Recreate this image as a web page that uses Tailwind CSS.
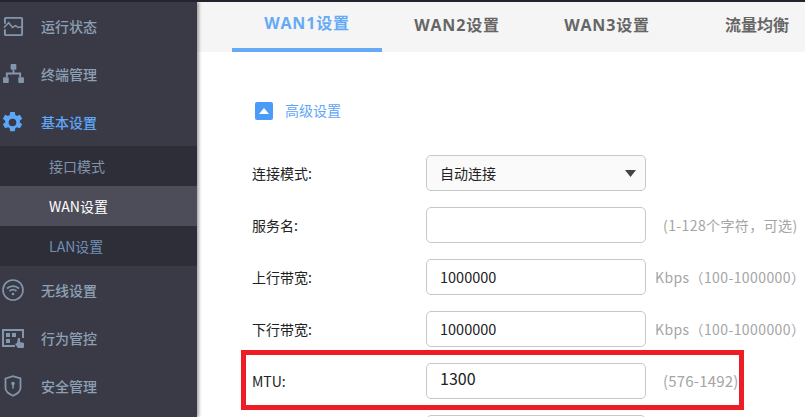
<!DOCTYPE html>
<html lang="zh">
<head>
<meta charset="utf-8">
<script src="https://cdn.jsdelivr.net/npm/@tailwindcss/browser@4"></script>
</head>
<body class="w-[805px] h-[417px] overflow-hidden bg-white font-['Noto_Sans_CJK_SC','Liberation_Sans',sans-serif]">
<div class="h-[2px] bg-[#24242e]"></div>
<div class="flex h-[415px] overflow-hidden">
  <aside class="w-[197px] shrink-0 h-full bg-[#3a3a46] text-[14px] shadow-[2px_0_3px_rgba(0,0,0,0.35)] relative z-10">
    <div class="h-12 flex items-center text-[#8ea0b5] font-medium">
      <div class="w-[41px] flex justify-center pr-[15px]">
        <svg class="w-[21px] h-[21px]" viewBox="0 0 22 22" fill="none" stroke="#8296ad" stroke-width="2"><path d="M2 8V3a1 1 0 0 1 1-1h16a1 1 0 0 1 1 1v16a1 1 0 0 1-1 1H3a1 1 0 0 1-1-1v-5"/><path d="M1 12l5-5 4 5 3-2 3 2 5-1" stroke-width="1.6"/></svg>
      </div>
      <span>运行状态</span>
    </div>
    <div class="h-12 flex items-center text-[#8ea0b5] font-medium">
      <div class="w-[41px] flex justify-center pr-[15px]">
        <svg class="w-[21px] h-[20px]" viewBox="0 0 22 21" fill="#8296ad"><rect x="8" y="0" width="6" height="6" rx="1"/><rect x="0" y="14" width="6" height="6" rx="1"/><rect x="16" y="14" width="6" height="6" rx="1"/><path d="M10 6h2v3h7v5h-2v-3H5v3H3V9h7z"/></svg>
      </div>
      <span>终端管理</span>
    </div>
    <div class="h-12 flex items-center text-[#5ea6f8] font-medium">
      <div class="w-[41px] flex justify-center pr-[16px]">
        <svg class="w-[23px] h-[23px]" viewBox="0 0 24 24" fill="#5ea6f8"><path fill-rule="evenodd" d="M14.400 1l.6 3.200 1.600.9 3.100-1.100 2.400 4.100-2.500 2.100v1.600l2.500 2.100-2.400 4.100-3.100-1.100-1.600.9-.6 3.200H9.600l-.6-3.200-1.600-.9-3.100 1.100-2.400-4.100 2.500-2.100v-1.600L1.900 8.100l2.400-4.100 3.100 1.100 1.600-.9.600-3.200zM12 8a4 4 0 1 0 0 8 4 4 0 0 0 0-8z"/></svg>
      </div>
      <span>基本设置</span>
    </div>
    <div class="bg-[#2e2e38]">
      <div class="h-10 flex items-center pl-[49px] text-[#7f93aa]">接口模式</div>
      <div class="h-10 flex items-center pl-[49px] text-white bg-[#4d4d59]">WAN设置</div>
      <div class="h-10 flex items-center pl-[49px] text-[#6f90b4]">LAN设置</div>
    </div>
    <div class="h-12 flex items-center text-[#8ea0b5] font-medium">
      <div class="w-[41px] flex justify-center pr-[15px]">
        <svg class="w-[22px] h-[22px]" viewBox="0 0 22 22" fill="none" stroke="#8296ad"><circle cx="11" cy="11" r="10" stroke-width="1.6"/><path d="M5 9.500a9 9 0 0 1 12 0M7.500 12a5.500 5.500 0 0 1 7 0" stroke-width="1.800"/><circle cx="11" cy="15" r="1.300" fill="#8296ad" stroke="none"/></svg>
      </div>
      <span>无线设置</span>
    </div>
    <div class="h-12 flex items-center text-[#8ea0b5] font-medium">
      <div class="w-[41px] flex justify-center pr-[15px]">
        <svg class="w-[23px] h-[19px]" viewBox="0 0 23 19" fill="none"><path d="M13 17H1V1h20v8" stroke="#8296ad" stroke-width="2"/><rect x="4" y="4" width="4" height="4" fill="#8296ad"/><rect x="10" y="4" width="4" height="4" fill="#8296ad"/><rect x="4" y="10" width="4" height="4" fill="#8296ad"/><path d="M16 9h2v4l4 1v4a1 1 0 0 1-1 1h-5l-3-4 2-1z" fill="#8296ad"/></svg>
      </div>
      <span>行为管控</span>
    </div>
    <div class="h-12 flex items-center text-[#8ea0b5] font-medium">
      <div class="w-[41px] flex justify-center pr-[15px]">
        <svg class="w-[18px] h-[22px]" viewBox="0 0 18 22" fill="none"><path d="M1.500 3.500L9 1.200l7.500 2.300v9.500c0 3.500-3.500 6-7.500 7.800-4-1.800-7.500-4.300-7.500-7.800z" stroke="#8296ad" stroke-width="1.800"/><circle cx="9" cy="8.500" r="1.800" fill="#8296ad"/><rect x="8.200" y="9" width="1.600" height="4.500" fill="#8296ad"/></svg>
      </div>
      <span>安全管理</span>
    </div>
  </aside>

  <main class="flex-1 min-w-0 h-full overflow-hidden relative">
    <div class="h-[50px] bg-[#f5f5f5] pl-[35px] flex overflow-hidden text-[16px] font-bold font-['Open_Sans','Noto_Sans_CJK_SC',sans-serif]">
      <div class="w-[150px] shrink-0 h-[50px] flex items-center justify-center pb-1 border-b-4 border-[#66aaf7] text-[#66aaf7] tracking-[0.8px]">WAN1设置</div>
      <div class="w-[150px] shrink-0 h-[50px] flex items-center justify-center pb-1 text-[#666] tracking-[0.8px]">WAN2设置</div>
      <div class="w-[150px] shrink-0 h-[50px] flex items-center justify-center pb-1 text-[#666] tracking-[0.8px]">WAN3设置</div>
      <div class="w-[150px] shrink-0 h-[50px] flex items-center justify-center pb-1 text-[#666]">流量均衡</div>
    </div>

    <div class="pl-[55px] pt-[50px]">
      <div class="flex items-center h-[18px] gap-[12px] pl-[3px] text-[14px] text-[#5ea6f8]">
        <span class="w-[18px] h-[18px] rounded-[2px] bg-[#4a9cf8] flex items-center justify-center">
          <svg class="w-[10px] h-[6px]" viewBox="0 0 10 6" fill="#fff"><path d="M5 0l5 6H0z"/></svg>
        </span>
        <span class="-mt-[2px]">高级设置</span>
      </div>
      <div class="mt-[35px] flex flex-col gap-4 text-[14px] text-[#222]">
        <div class="flex items-center h-9">
          <label class="w-[174px] shrink-0">连接模式:</label>
          <div class="w-[220px] h-9 shrink-0 border border-[#c8c8c8] rounded-[5px] bg-[#fafafa] flex items-center justify-between pl-[13px] pr-[9px]">
            <span>自动连接</span>
            <svg class="w-[11px] h-[7px]" viewBox="0 0 11 7" fill="#444"><path d="M0 0h11L5.500 7z"/></svg>
          </div>
        </div>
        <div class="flex items-center h-9">
          <label class="w-[174px] shrink-0">服务名:</label>
          <div class="w-[220px] h-9 shrink-0 border border-[#c8c8c8] rounded-[5px] bg-white"></div>
          <span class="ml-[17px] whitespace-nowrap text-[#a5a5a5] tracking-[0.4px]">(1-128个字符，可选)</span>
        </div>
        <div class="flex items-center h-9">
          <label class="w-[174px] shrink-0">上行带宽:</label>
          <div class="w-[220px] h-9 shrink-0 border border-[#c8c8c8] rounded-[5px] bg-white flex items-center pl-[13px] text-[14.5px]">1000000</div>
          <span class="ml-[9px] whitespace-nowrap text-[#a5a5a5] tracking-[0.4px]">Kbps（100-1000000）</span>
        </div>
        <div class="flex items-center h-9">
          <label class="w-[174px] shrink-0">下行带宽:</label>
          <div class="w-[220px] h-9 shrink-0 border border-[#c8c8c8] rounded-[5px] bg-white flex items-center pl-[13px] text-[14.5px]">1000000</div>
          <span class="ml-[9px] whitespace-nowrap text-[#a5a5a5] tracking-[0.4px]">Kbps（100-1000000）</span>
        </div>
        <div class="flex items-center h-9">
          <label class="w-[174px] shrink-0">MTU:</label>
          <div class="w-[220px] h-9 shrink-0 border border-[#c8c8c8] rounded-[5px] bg-white flex items-center pl-[13px] pb-[6px] text-[16px]">1300</div>
          <span class="ml-[17px] whitespace-nowrap text-[#a5a5a5] text-[15px] tracking-[0.2px]">(576-1492)</span>
        </div>
        <div class="flex items-center h-9">
          <div class="w-[174px] shrink-0"></div>
          <div class="w-[220px] h-9 shrink-0 border border-[#c8c8c8] rounded-[5px] bg-white"></div>
        </div>
      </div>
    </div>
    <div class="absolute left-[44px] top-[348px] w-[503px] h-[60px] border-[5px] border-[#ee1c25]"></div>
  </main>
</div>
</body>
</html>
